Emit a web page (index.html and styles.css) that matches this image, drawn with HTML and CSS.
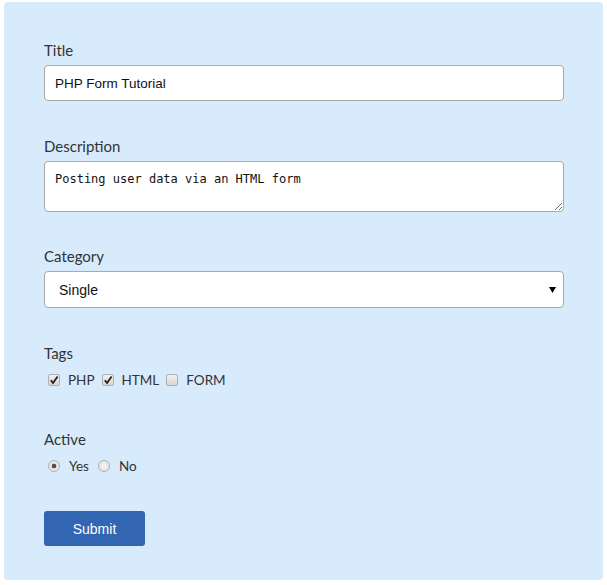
FILE: index.html
```html
<!DOCTYPE html>
<html>
<head>
<meta charset="utf-8">
<link rel="stylesheet" href="styles.css">
</head>
<body>
<form class="panel">
  <div class="field field-title">
    <label class="lbl">Title</label>
    <input class="text-input" type="text" value="PHP Form Tutorial">
  </div>
  <div class="field field-desc">
    <label class="lbl">Description</label>
    <textarea class="text-area">Posting user data via an HTML form</textarea>
  </div>
  <div class="field field-cat">
    <label class="lbl">Category</label>
    <select class="select-input"><option>Single</option></select>
  </div>
  <div class="field field-tags">
    <label class="lbl">Tags</label>
    <div class="choice-row">
      <label class="choice"><input type="checkbox" class="cb" checked><span>PHP</span></label>
      <label class="choice"><input type="checkbox" class="cb" checked><span>HTML</span></label>
      <label class="choice"><input type="checkbox" class="cb"><span>FORM</span></label>
    </div>
  </div>
  <div class="field field-active">
    <label class="lbl">Active</label>
    <div class="choice-row">
      <label class="choice choice-radio"><input type="radio" name="active" class="rb" checked><span>Yes</span></label>
      <label class="choice choice-radio"><input type="radio" name="active" class="rb"><span>No</span></label>
    </div>
  </div>
  <button type="button" class="submit">Submit</button>
</form>
</body>
</html>
```
FILE: styles.css
```css
html, body {
  margin: 0;
  padding: 0;
  background: #ffffff;
}

.panel {
  margin: 2px 4px 0 4px;
  width: 599px;
  box-sizing: border-box;
  height: 578px;
  background: #d7ebfc;
  border-radius: 4px;
  padding: 37px 39px 0 40px;
  font-family: Lato, "Open Sans", sans-serif;
  color: #333;
}

.field {
  display: flex;
  flex-direction: column;
}

.field-title { margin-bottom: 34px; }
.field-desc { margin-bottom: 33px; }
.field-cat { margin-bottom: 34px; }

.lbl {
  font-size: 15px;
  line-height: 18px;
  height: 18px;
  padding-top: 2px;
  margin-bottom: 6px;
  color: #333;
}

.text-input,
.text-area,
.select-input {
  box-sizing: border-box;
  width: 520px;
  border: 1px solid #a9a9a9;
  border-radius: 4px;
  background: #fff;
  margin: 0;
  outline: none;
}

.text-input {
  height: 36px;
  padding: 0 10px;
  font-family: Arial, "Liberation Sans", sans-serif;
  font-size: 13.5px;
  color: #111;
}

.text-area {
  height: 51px;
  padding: 10px 10px;
  font-family: "DejaVu Sans Mono", "Liberation Mono", monospace;
  font-size: 12px;
  line-height: 15px;
  color: #111;
  resize: both;
  display: block;
}

.select-input {
  height: 37px;
  padding: 0 14px;
  font-family: Arial, "Liberation Sans", sans-serif;
  font-size: 14px;
  color: #111;
  -webkit-appearance: none;
  appearance: none;
  background: #fff url("data:image/svg+xml;utf8,<svg xmlns='http://www.w3.org/2000/svg' width='7' height='6'><path d='M0 0H7L3.5 6Z' fill='%23000'/></svg>") no-repeat right 7px center;
}

.field-tags {
  height: 86px;
}

.field-active {
  height: 83px;
}

.choice-row {
  display: flex;
  align-items: center;
  height: 20px;
  margin-top: 2px;
  padding-left: 4px;
}

.choice {
  display: flex;
  align-items: center;
  font-size: 13.5px;
  color: #333;
  margin-right: 7px;
}

.choice-radio {
  margin-right: 9px;
}

.cb,
.rb {
  -webkit-appearance: none;
  appearance: none;
  width: 12px;
  height: 12px;
  margin: 0 8px 0 0;
  box-sizing: border-box;
  border: 1px solid #b0b0b0;
  background: linear-gradient(#f0f0f0, #d6d6d6);
}

.cb {
  border-radius: 2px;
}

.cb:checked {
  background: url("data:image/svg+xml;utf8,<svg xmlns='http://www.w3.org/2000/svg' width='10' height='10'><path d='M1.8 5.2L4 8L8.6 1.4' stroke='%23222' stroke-width='1.8' fill='none'/></svg>") no-repeat center, linear-gradient(#f0f0f0, #d6d6d6);
}

.rb {
  border-radius: 50%;
  margin-right: 9px;
  background: radial-gradient(circle, #f6f6f6 0, #dcdcdc 100%);
}

.rb:checked {
  background: radial-gradient(circle, #444 0, #555 2px, #e0e0e0 2.6px, #f0f0f0 100%);
}

.submit {
  display: block;
  width: 101px;
  height: 35px;
  margin-top: 0;
  border: none;
  border-radius: 3px;
  background: #3266b2;
  color: #fff;
  font-family: Arial, "Liberation Sans", sans-serif;
  font-size: 14px;
}
```
